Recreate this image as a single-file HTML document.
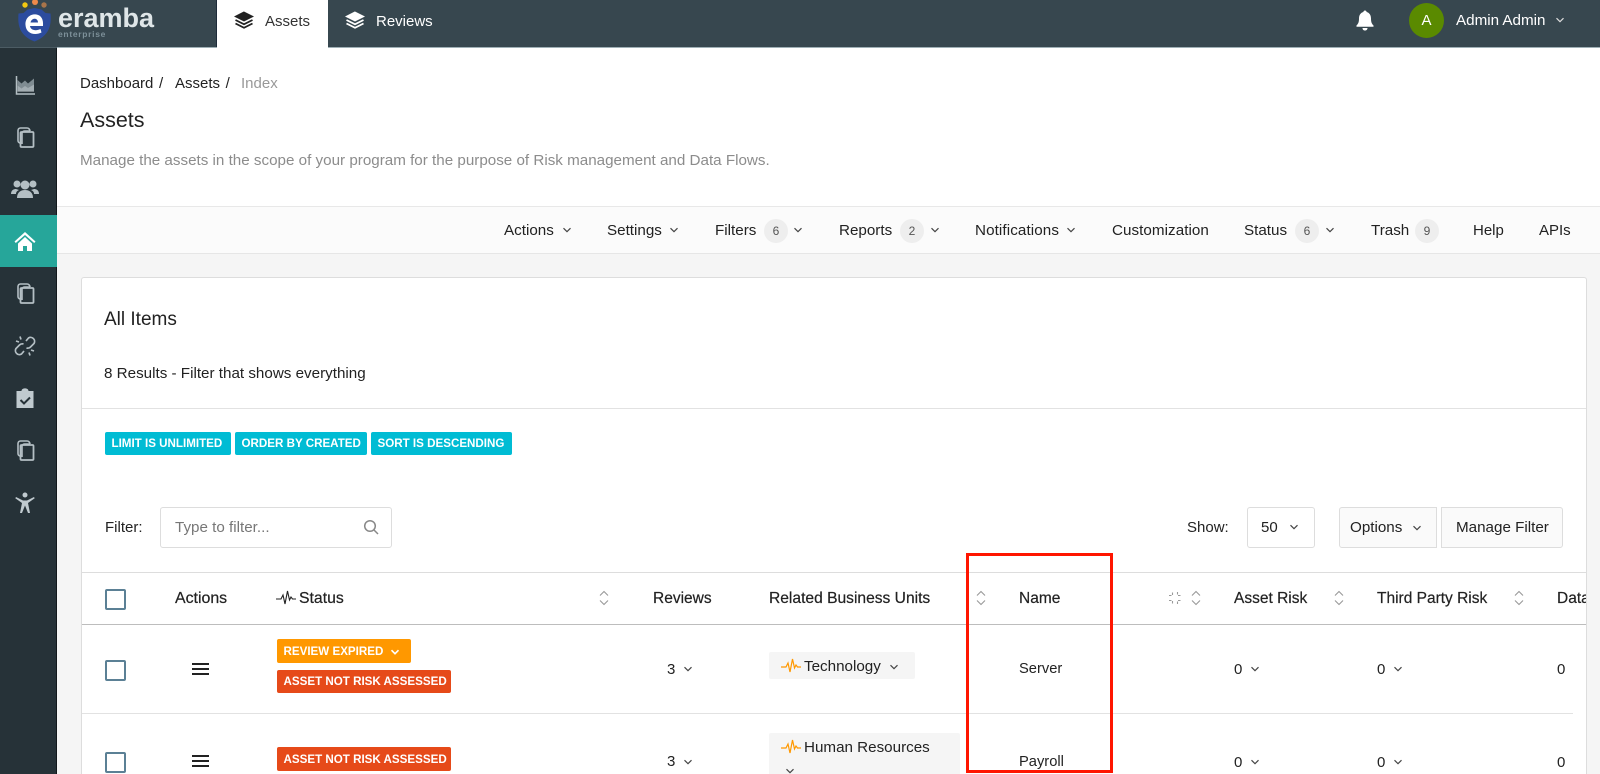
<!DOCTYPE html>
<html><head><meta charset="utf-8"><title>Assets</title>
<style>
html,body{margin:0;padding:0;width:1600px;height:774px;overflow:hidden;background:#fff}
body{position:relative;font-family:"Liberation Sans",sans-serif;font-size:15.200px;color:#222}
div,span.t,svg.a{position:absolute}
.t{position:absolute;white-space:nowrap;line-height:20px;height:20px}
.h{-webkit-text-stroke:.2px #222;font-size:15.500px}
.bd{position:absolute;width:24px;height:24px;border-radius:12px;background:#eee;color:#555;font-size:12px;line-height:24px;text-align:center}
.tag{position:absolute;border-radius:2px;color:#fff;font-weight:bold;font-size:11.600px;line-height:24px;height:23px;white-space:nowrap;box-sizing:border-box;padding-left:6.500px}
.cb{position:absolute;left:105px;width:21px;height:21px;box-sizing:border-box;border:2px solid #5b8095;border-radius:2px}
.ham{position:absolute;left:192px;width:17px;height:2px;background:#222}
svg.c{position:absolute;width:12px;height:8px;fill:none;stroke:#444;stroke-width:1.200}
svg.s{position:absolute;width:10px;height:16px;fill:none;stroke:#999;stroke-width:1.100}
svg.n{position:absolute;left:13px;width:24px;height:24px;fill:none;stroke:#b4bfc4;stroke-width:1.600}
</style></head><body>
<svg width="0" height="0" style="position:absolute"><defs>
<symbol id="cv" viewBox="0 0 12 8"><path d="M2.500 2.200L6 5.700l3.500-3.500"/></symbol>
<symbol id="so" viewBox="0 0 10 16"><path d="M1 5.500l4-4 4 4M1 10.500l4 4 4-4"/></symbol>
<symbol id="pu" viewBox="0 0 20 16"><path d="M0 9h5l2-4 2 9 2.500-13 2 9 1.500-3 1.500 2h3.500"/></symbol>
<symbol id="cp" viewBox="0 0 24 24"><path d="M9 18H7.500A2.500 2.500 0 0 1 5 15.500V5.500A2.500 2.500 0 0 1 7.500 3H14a3 3 0 0 1 3 3"/><path d="M9 19V8a3 3 0 0 1 3-2h5"/><rect x="7.500" y="7" width="13" height="15" rx="1" stroke-width="1.800"/></symbol>
<symbol id="st" viewBox="0 0 20 20"><path d="M10 2L1 6.500 10 11l9-4.500z" fill="currentColor" stroke="currentColor"/><path d="M1.500 10L10 14.300 18.500 10M1.500 13.500L10 17.800l8.500-4.300" fill="none" stroke="currentColor" stroke-width="1.800"/></symbol>
</defs></svg>

<!-- top bar -->
<div style="left:0;top:0;width:1600px;height:47px;background:#37474f"></div>
<div style="left:0;top:47px;width:1600px;height:1px;background:#9fb0b6"></div>
<div style="left:0;top:47px;width:57px;height:1px;background:#4c5c64"></div>
<!-- logo -->
<svg class="a" style="left:16px;top:0;width:40px;height:43px" viewBox="0 0 40 43">
<circle cx="9" cy="5" r="2.700" fill="#f2c811"/><circle cx="19" cy="2" r="3" fill="#f08a4b"/><circle cx="28" cy="5" r="2.700" fill="#a8744a"/>
<path d="M2.500 13.500l5-.5 4-3.500 7-1.500 7 1.500 4 3.500 5 .5c1 12-1 22-16 28C3.500 35.500 1.500 25.500 2.500 13.500z" fill="#2c4c9e"/>
<path d="M27 26H14c.5 4 5.500 5.500 10.500 3l1 3.500c-7 3.500-15.500 1-16-7.500-.5-8 6-11.500 11-10.500 5 1 7 5 6.500 11.500zM14.500 22.500h7.500c0-5-6.500-5-7.500 0z" fill="#fff"/>
</svg>
<span class="t" style="left:58px;top:4px;font-size:27px;font-weight:bold;color:#dfe6e8;line-height:28px;height:28px">eramba</span>
<span class="t" style="left:58px;top:29px;font-size:8.500px;font-weight:bold;color:#7d9099;letter-spacing:.7px;line-height:10px;height:10px">enterprise</span>
<!-- tabs -->
<div style="left:217px;top:0;width:111px;height:48px;background:#fff"></div>
<div style="left:216px;top:0;width:1px;height:47px;background:#1e2b3a"></div>
<svg class="a" style="left:234px;top:10px;width:20px;height:20px;color:#222"><use href="#st"/></svg>
<span class="t" style="left:265px;top:12px;color:#333;font-size:15px">Assets</span>
<svg class="a" style="left:345px;top:10px;width:20px;height:20px;color:#fff"><use href="#st"/></svg>
<span class="t" style="left:376px;top:12px;color:#fff;font-size:15px">Reviews</span>
<!-- right -->
<svg class="a" style="left:1354px;top:9px;width:22px;height:22px" viewBox="0 0 22 22"><path d="M11 1.500c1 0 1.600.7 1.600 1.500 3 .8 4.400 3.300 4.400 6.500 0 4 1 5.500 2.500 7v1.200h-17v-1.200c1.500-1.500 2.500-3 2.500-7 0-3.200 1.400-5.700 4.400-6.500 0-.8.600-1.500 1.600-1.500zM8.500 19h5c0 1.500-1 2.500-2.500 2.500S8.500 20.500 8.500 19z" fill="#fff"/></svg>
<div style="left:1409px;top:3px;width:35px;height:35px;border-radius:50%;background:#5a8a00;color:#fff;text-align:center;line-height:35px;font-size:15px">A</div>
<span class="t" style="left:1456px;top:11px;color:#fff;font-size:15.200px">Admin Admin</span>
<svg class="c" style="left:1554px;top:16px;stroke:#ddd"><use href="#cv"/></svg>

<!-- sidebar -->
<div style="left:0;top:48px;width:56px;height:726px;background:#263238"></div>
<div style="left:56px;top:48px;width:1px;height:726px;background:#12181c"></div>
<div style="left:0;top:215px;width:57px;height:52px;background:#26a69a"></div>
<svg class="n" style="top:73px" viewBox="0 0 24 24"><path d="M3.500 3v18h18.500" stroke-width="1.500"/><path d="M4.500 18V7l4 3.500 3.500-3 3 3 6-5V18z" fill="#7f8c92" stroke="none"/><path d="M4.500 12.500l4 3 3.500-2.500 3 2 6-3.500V19h-16.500z" fill="#c5ced2" stroke="none" opacity=".5"/></svg>
<svg class="n" style="top:125px"><use href="#cp"/></svg>
<svg class="a" style="left:11px;top:176px;width:28px;height:24px" viewBox="0 0 28 24"><g fill="#b4bfc4"><circle cx="6" cy="8" r="3.500"/><circle cx="22" cy="8" r="3.500"/><path d="M0 18c0-4 3-5 5-5l3 1c-2 1-3 2-3 4z"/><path d="M28 18c0-4-3-5-5-5l-3 1c2 1 3 2 3 4z"/><circle cx="14" cy="9" r="4.500"/><path d="M6 22c0-6 4-8 8-8s8 2 8 8z"/></g></svg>
<svg class="a" style="left:13px;top:229px;width:24px;height:24px" viewBox="0 0 24 24"><path d="M12 3L1.500 12.500l1.300 1.500L12 6l9.200 8 1.300-1.500z" fill="#fff"/><path d="M5 14.500L12 8l7 6.500V22h-5v-5h-4v5H5z" fill="#fff"/></svg>
<svg class="n" style="top:281px"><use href="#cp"/></svg>
<svg class="n" style="top:334px" viewBox="0 0 24 24"><path d="M13 7l2.500-3a4 4 0 0 1 5.500 5.500l-3.500 3.500a4 4 0 0 1-4 1M11 17l-2.500 3A4 4 0 0 1 3 14.500L6.500 11a4 4 0 0 1 4-1M3 7l3 1M7 2.500l1 3M21 17l-3-1M17 21.500l-1-3" stroke-width="1.700"/></svg>
<svg class="a" style="left:13px;top:386px;width:24px;height:24px" viewBox="0 0 24 24"><path d="M3.500 5h5c0-3.500 7-3.500 7 0h5v17h-17z" fill="#c0cacf"/><path d="M7.500 14l3.500 3.500 6-6" fill="none" stroke="#263238" stroke-width="2"/></svg>
<svg class="n" style="top:438px"><use href="#cp"/></svg>
<svg class="a" style="left:13px;top:491px;width:24px;height:24px" viewBox="0 0 24 24"><circle cx="12" cy="4" r="2.500" fill="#c0cacf"/><path d="M3 6l7 3.500h4L21 6l.7 1.300L15 12l2 10h-2l-3-7.500L9 22H7l2-10-6.700-4.700z" fill="#c0cacf"/></svg>

<!-- header text -->
<span class="t" style="left:80px;top:74px;word-spacing:1.500px;font-size:15px">Dashboard /</span>
<span class="t" style="left:175px;top:74px;word-spacing:1.500px;font-size:15px">Assets /</span>
<span class="t" style="left:241px;top:74px;color:#999;font-size:15px">Index</span>
<span class="t" style="left:80px;top:106px;font-size:21.500px;line-height:28px;height:28px">Assets</span>
<span class="t" style="left:80px;top:151px;color:#8c8c8c">Manage the assets in the scope of your program for the purpose of Risk management and Data Flows.</span>

<!-- toolbar -->
<div style="left:57px;top:206px;width:1543px;height:568px;background:#f5f5f5"></div>
<div style="left:57px;top:206px;width:1543px;height:48px;background:#fbfbfb;border-top:1.500px solid #e8e8e8;border-bottom:1.500px solid #e6e6e6;box-sizing:border-box"></div>
<span class="t" style="left:504px;top:221px">Actions</span><svg class="c" style="left:561px;top:226px"><use href="#cv"/></svg>
<span class="t" style="left:607px;top:221px">Settings</span><svg class="c" style="left:668px;top:226px"><use href="#cv"/></svg>
<span class="t" style="left:715px;top:221px">Filters</span><span class="bd" style="left:764px;top:219px">6</span><svg class="c" style="left:792px;top:226px"><use href="#cv"/></svg>
<span class="t" style="left:839px;top:221px">Reports</span><span class="bd" style="left:900px;top:219px">2</span><svg class="c" style="left:929px;top:226px"><use href="#cv"/></svg>
<span class="t" style="left:975px;top:221px;letter-spacing:.1px">Notifications</span><svg class="c" style="left:1065px;top:226px"><use href="#cv"/></svg>
<span class="t" style="left:1112px;top:221px;letter-spacing:.05px">Customization</span>
<span class="t" style="left:1244px;top:221px">Status</span><span class="bd" style="left:1295px;top:219px">6</span><svg class="c" style="left:1324px;top:226px"><use href="#cv"/></svg>
<span class="t" style="left:1371px;top:221px">Trash</span><span class="bd" style="left:1415px;top:219px">9</span>
<span class="t" style="left:1473px;top:221px;font-size:15px">Help</span>
<span class="t" style="left:1539px;top:221px;font-size:15px">APIs</span>

<!-- panel -->
<div style="left:81px;top:277px;width:1506px;height:497px;background:#fff;border:1px solid #ddd;border-bottom:0;border-radius:3px 3px 0 0;box-sizing:border-box"></div>
<span class="t" style="left:104px;top:309px;font-size:19px;line-height:22px;height:22px">All Items</span>
<span class="t" style="left:104px;top:364px">8 Results - Filter that shows everything</span>
<div style="left:82px;top:408px;width:1504px;height:1px;background:#e2e2e2"></div>
<span class="tag" style="left:105px;top:432px;width:126px;background:#00bcd4">LIMIT IS UNLIMITED</span>
<span class="tag" style="left:235px;top:432px;width:132px;background:#00bcd4">ORDER BY CREATED</span>
<span class="tag" style="left:371px;top:432px;width:141px;background:#00bcd4">SORT IS DESCENDING</span>

<!-- filter -->
<span class="t" style="left:105px;top:518px;font-size:15px">Filter:</span>
<div style="left:160px;top:507px;width:232px;height:41px;border:1px solid #ddd;border-radius:3px;box-sizing:border-box"></div>
<span class="t" style="left:175px;top:518px;color:#777">Type to filter...</span>
<svg class="a" style="left:363px;top:519px;width:16px;height:16px;fill:none;stroke:#888;stroke-width:1.500" viewBox="0 0 16 16"><circle cx="7" cy="7" r="5.300"/><path d="M11 11l4 4"/></svg>
<span class="t" style="left:1187px;top:518px;font-size:15px">Show:</span>
<div style="left:1247px;top:507px;width:68px;height:41px;border:1px solid #ddd;border-radius:3px;box-sizing:border-box"></div>
<span class="t" style="left:1261px;top:518px;font-size:15px">50</span><svg class="c" style="left:1288px;top:523px"><use href="#cv"/></svg>
<div style="left:1339px;top:507px;width:98px;height:41px;background:#fafafa;border:1px solid #ddd;border-radius:3px 0 0 3px;box-sizing:border-box"></div>
<span class="t" style="left:1350px;top:518px">Options</span><svg class="c" style="left:1411px;top:524px"><use href="#cv"/></svg>
<div style="left:1441px;top:507px;width:122px;height:41px;background:#fafafa;border:1px solid #ddd;border-radius:0 3px 3px 0;box-sizing:border-box"></div>
<span class="t" style="left:1456px;top:518px">Manage Filter</span>

<!-- table header -->
<div style="left:82px;top:572px;width:1504px;height:1px;background:#ddd"></div>
<div style="left:82px;top:624px;width:1504px;height:1px;background:#bdbdbd"></div>
<div style="left:82px;top:713px;width:1491px;height:1px;background:#e2e2e2"></div>
<span class="cb" style="top:589px"></span>
<span class="t h" style="left:175px;top:589px;font-size:15.900px">Actions</span>
<svg class="a" style="left:276px;top:590px;width:20px;height:16px;fill:none;stroke:#222;stroke-width:1.100"><use href="#pu"/></svg>
<span class="t h" style="left:299px;top:589px;font-size:15.800px">Status</span>
<svg class="s" style="left:599px;top:590px"><use href="#so"/></svg>
<span class="t h" style="left:653px;top:589px">Reviews</span>
<span class="t h" style="left:769px;top:589px;font-size:15.600px">Related Business Units</span>
<svg class="s" style="left:976px;top:590px"><use href="#so"/></svg>
<span class="t h" style="left:1019px;top:589px">Name</span>
<svg class="a" style="left:1168px;top:591px;width:14px;height:14px;fill:none;stroke:#999;stroke-width:1.100" viewBox="0 0 14 14"><path d="M1 4.500h3.500V1M9.500 1v3.500H13M1 9.500h3.500V13M9.500 13V9.500H13" stroke-dasharray="2.500 1.500"/></svg>
<svg class="s" style="left:1191px;top:590px"><use href="#so"/></svg>
<span class="t h" style="left:1234px;top:589px">Asset Risk</span>
<svg class="s" style="left:1334px;top:590px"><use href="#so"/></svg>
<span class="t h" style="left:1377px;top:589px">Third Party Risk</span>
<svg class="s" style="left:1514px;top:590px"><use href="#so"/></svg>
<div style="left:1557px;top:589px;width:29px;height:20px;overflow:hidden"><span class="t h" style="left:0;top:0">Data Flows</span></div>

<!-- row 1 -->
<span class="cb" style="top:660px"></span>
<span class="ham" style="top:663px"></span><span class="ham" style="top:668px"></span><span class="ham" style="top:673px"></span>
<span class="tag" style="left:277px;top:639px;width:134px;height:24px;line-height:25px;background:#ff9800">REVIEW EXPIRED</span>
<svg class="c" style="left:389px;top:648px;stroke:#fff;stroke-width:1.600"><use href="#cv"/></svg>
<span class="tag" style="left:277px;top:670px;width:174px;line-height:23px;background:#e64a19">ASSET NOT RISK ASSESSED</span>
<span class="t" style="left:667px;top:660px;font-size:15px">3</span><svg class="c" style="left:682px;top:665px"><use href="#cv"/></svg>
<div style="left:769px;top:652px;width:146px;height:27px;background:#f5f5f5;border-radius:2px"></div>
<svg class="a" style="left:781px;top:658px;width:20px;height:16px;fill:none;stroke:#ff9800;stroke-width:1.200"><use href="#pu"/></svg>
<span class="t" style="left:804px;top:657px">Technology</span><svg class="c" style="left:888px;top:663px"><use href="#cv"/></svg>
<span class="t" style="left:1019px;top:659px;font-size:14.700px">Server</span>
<span class="t" style="left:1234px;top:660px;font-size:15px">0</span><svg class="c" style="left:1249px;top:665px"><use href="#cv"/></svg>
<span class="t" style="left:1377px;top:660px;font-size:15px">0</span><svg class="c" style="left:1392px;top:665px"><use href="#cv"/></svg>
<span class="t" style="left:1557px;top:660px;font-size:15px">0</span>

<!-- row 2 -->
<span class="cb" style="top:752px"></span>
<span class="ham" style="top:755px"></span><span class="ham" style="top:760px"></span><span class="ham" style="top:765px"></span>
<span class="tag" style="left:277px;top:747px;width:174px;height:24px;line-height:25px;background:#e64a19">ASSET NOT RISK ASSESSED</span>
<span class="t" style="left:667px;top:752px;font-size:15px">3</span><svg class="c" style="left:682px;top:758px"><use href="#cv"/></svg>
<div style="left:769px;top:733px;width:191px;height:41px;background:#f5f5f5;border-radius:2px 2px 0 0"></div>
<svg class="a" style="left:781px;top:739px;width:20px;height:16px;fill:none;stroke:#ff9800;stroke-width:1.200"><use href="#pu"/></svg>
<span class="t" style="left:804px;top:738px">Human Resources</span><svg class="c" style="left:784px;top:767px"><use href="#cv"/></svg>
<span class="t" style="left:1019px;top:752px;font-size:14.700px">Payroll</span>
<span class="t" style="left:1234px;top:753px;font-size:15px">0</span><svg class="c" style="left:1249px;top:758px"><use href="#cv"/></svg>
<span class="t" style="left:1377px;top:753px;font-size:15px">0</span><svg class="c" style="left:1392px;top:758px"><use href="#cv"/></svg>
<span class="t" style="left:1557px;top:753px;font-size:15px">0</span>

<!-- red box -->
<div style="left:966px;top:553px;width:147px;height:220px;border:3px solid #ff1500;box-sizing:border-box"></div>
</body></html>
